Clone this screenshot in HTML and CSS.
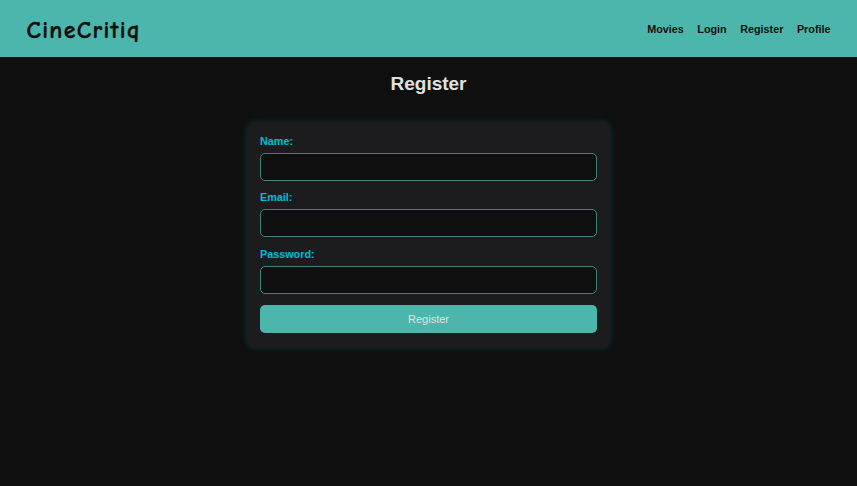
FILE: index.html
```html
<!DOCTYPE html>
<html lang="en">
<head>
<meta charset="utf-8">
<title>CineCritiq</title>
<link rel="stylesheet" href="styles.css">
</head>
<body>
<header class="header">
  <div class="logo">CineCritiq</div>
  <nav class="nav"><a>Movies</a><a>Login</a><a>Register</a><a>Profile</a></nav>
</header>
<main>
  <h1 class="title">Register</h1>
  <form class="card">
    <label class="label" for="name">Name:</label>
    <input class="input" id="name" type="text">
    <label class="label" for="email">Email:</label>
    <input class="input" id="email" type="email">
    <label class="label" for="password">Password:</label>
    <input class="input" id="password" type="password">
    <button class="button" type="button">Register</button>
  </form>
</main>
</body>
</html>
```
FILE: styles.css
```css
* { box-sizing: border-box; }
body {
  margin: 0;
  min-height: 486px;
  background: #0f0f0f;
  color: #e0e0e0;
  font-family: "Liberation Sans", Arial, sans-serif;
  font-size: 10.8px;
}
.header {
  height: 57px;
  padding: 0 26.5px;
  display: flex;
  align-items: center;
  justify-content: space-between;
  background: #4db6ac;
  color: #0f0f0f;
}
.logo {
  font-family: "Comic Sans MS", "Comic Neue", Lato, cursive;
  font-size: 24px;
  font-weight: 700;
  line-height: 30px;
  letter-spacing: 1.3px;
  padding-top: 3px;
  -webkit-text-stroke: 0.4px #0f0f0f;
}
.nav {
  display: flex;
  gap: 13.5px;
  font-weight: 700;
}
.title {
  margin: 16px 0 0;
  font-size: 19px;
  line-height: 22px;
  text-align: center;
}
.card {
  width: 363px;
  height: 226px;
  margin: 27px auto 0;
  padding: 13px;
  display: flex;
  flex-direction: column;
  background: #1c1c1e;
  border-radius: 8px;
  box-shadow: 0 0 7px rgba(0, 188, 212, 0.2);
}
.label {
  height: 18px;
  line-height: 13px;
  font-weight: 700;
  color: #00bcd4;
}
.input {
  height: 28px;
  margin: 0 0 10.4px;
  padding: 0 7px;
  border: 1px solid #3f827b;
  border-radius: 5px;
  background: #0f0f0f;
  color: #e0e0e0;
  font: inherit;
}
.button {
  height: 28px;
  margin-top: 0.5px;
  border: 0;
  border-radius: 5px;
  background: #4db6ac;
  color: #e0e0e0;
  font: inherit;
  font-size: 11px;
}
```
